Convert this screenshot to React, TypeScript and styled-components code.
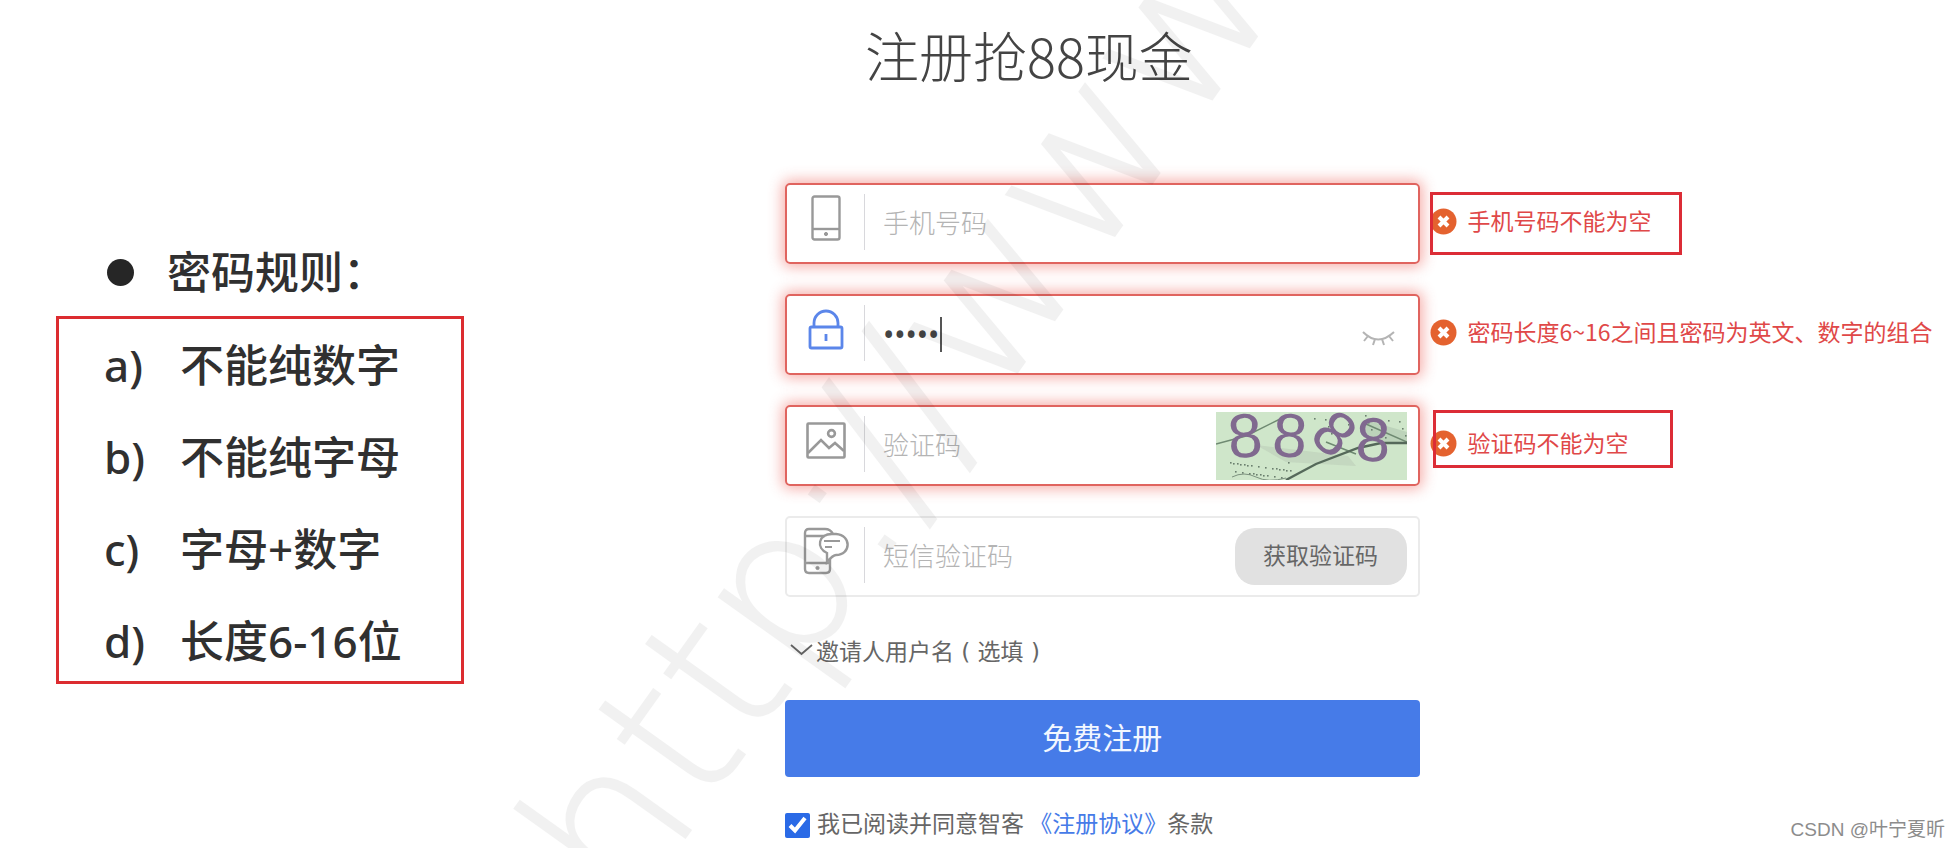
import React, { useState } from "react";
import styled, { createGlobalStyle } from "styled-components";

const sans = '"Noto Sans", "Noto Sans CJK SC", sans-serif';
const cjk = '"Noto Sans CJK SC", sans-serif';

const GlobalStyle = createGlobalStyle`
  *, *::before, *::after { box-sizing: border-box; }
  body { margin: 0; background: #fff; font-family: ${cjk}; }
  input, button { font-family: inherit; }
`;

const Page = styled.div`
  position: relative;
  display: grid;
  grid-template-columns: 2fr 3fr;
  min-height: 100vh;
  overflow: hidden;
`;

const Rules = styled.aside`
  padding: 226px 0 0 56px;
  font-family: ${sans};
  font-size: 44px;
  font-weight: 500;
  color: #303030;
`;

const RulesTitle = styled.h2`
  display: flex;
  align-items: center;
  gap: 33px;
  height: 90px;
  margin: 0;
  padding: 2px 0 0 51px;
  font-size: inherit;
  font-weight: inherit;
  line-height: 60px;
`;

const Bullet = styled.span`
  width: 27px;
  height: 27px;
  border-radius: 50%;
  background: #262626;
`;

const RuleList = styled.ul`
  display: flex;
  flex-direction: column;
  gap: 32px;
  width: 56%;
  margin: 0;
  padding: 16px 0 10px 45px;
  border: 3px solid #dc2c30;
  list-style: none;
  white-space: nowrap;
`;

const Rule = styled.li`
  display: flex;
  height: 60px;
  line-height: 60px;
`;

const Marker = styled.span`
  width: 76px;
`;

const Main = styled.main`
  padding: 22px 0 6px 1px;
  color: #666;
`;

const Title = styled.h1`
  margin: 0 0 95px;
  padding-left: 80px;
  font-size: 54px;
  font-weight: 300;
  line-height: 66px;
  color: #444;
`;

const Form = styled.form`
  display: flex;
  flex-direction: column;
`;

const Row = styled.div`
  display: flex;
  gap: 10px;
  height: 81px;
  margin-bottom: 30px;
`;

const Field = styled.div<{ $invalid?: boolean }>`
  display: flex;
  align-items: center;
  width: 54%;
  padding-right: 11px;
  border: 2px solid ${(p) => (p.$invalid ? "#e0645f" : "#ebebeb")};
  border-radius: 5px;
  box-shadow: ${(p) => (p.$invalid ? "0 0 14px 3px rgba(235, 80, 70, 0.45)" : "none")};
`;

const FieldIcon = styled.label`
  display: flex;
  flex: none;
  align-self: flex-start;
  align-items: center;
  justify-content: center;
  width: 77px;
  height: 66px;
`;

const Divider = styled.span`
  flex: none;
  align-self: flex-start;
  width: 1px;
  height: 56px;
  margin: 9px 18px 0 0;
  background: #d8d8dc;
`;

const Input = styled.input`
  flex: 1;
  min-width: 0;
  height: 60px;
  padding: 0 0 4px;
  border: 0;
  outline: 0;
  background: transparent;
  font-size: 26px;
  font-weight: 300;
  color: #444;
  &::placeholder { color: #b4b4b4; opacity: 1; }
`;

const PasswordInput = styled(Input)`
  flex: none;
  width: 57px;
  padding: 0;
  font-family: "Noto Sans", sans-serif;
  font-size: 30px;
  font-weight: 400;
`;

const Caret = styled.span`
  width: 2px;
  height: 35px;
  margin-right: auto;
  background: #555;
`;

const EyeButton = styled.button`
  display: flex;
  padding: 8px 12px 0;
  border: 0;
  background: none;
`;

const CodeButton = styled.button`
  flex: none;
  width: 172px;
  height: 57px;
  padding: 0 0 5px;
  border: 0;
  border-radius: 20px;
  background: #e1e1e1;
  font-size: 23px;
  color: #666;
`;

const ErrorText = styled.p`
  position: relative;
  display: flex;
  align-items: center;
  gap: 11px;
  margin: 0;
  padding-bottom: 4px;
  font-size: 23px;
  color: #e04848;
  white-space: nowrap;
`;

const Message = styled.span`
  padding-bottom: 4px;
`;

const Highlight = styled.span<{ $compact?: boolean }>`
  position: absolute;
  inset: ${(p) => (p.$compact ? "5px -44px 18px 3px" : "9px -30px 9px 0")};
  border: 3px solid #dc2c36;
`;

const InviteToggle = styled.button`
  display: flex;
  align-items: center;
  gap: 3px;
  align-self: flex-start;
  height: 32px;
  margin: 7px 0 34px;
  padding: 0 0 0 5px;
  border: 0;
  background: none;
  font-family: "DejaVu Sans", ${cjk};
  font-size: 23px;
  color: #666;
`;

const Submit = styled.button`
  width: 54%;
  height: 77px;
  padding: 0 0 5px;
  border: 0;
  border-radius: 4px;
  background: #467be8;
  font-size: 30px;
  color: #f2f7ff;
`;

const Agreement = styled.div`
  display: flex;
  align-items: center;
  gap: 7px;
  height: 30px;
  margin-top: 33px;
  font-size: 23px;
  line-height: 26px;
`;

const Checkbox = styled.input`
  width: 25px;
  height: 25px;
  margin: 0;
  accent-color: #2a6ae6;
`;

const AgreementText = styled.span`
  padding-bottom: 6px;
`;

const Link = styled.a`
  color: #467be8;
  text-decoration: none;
`;

const Watermark = styled.svg`
  position: absolute;
  inset: 0;
  width: 100%;
  height: 100%;
  pointer-events: none;
`;

const Credit = styled.span`
  position: absolute;
  right: 15px;
  bottom: 4px;
  font-family: "Liberation Sans", ${cjk};
  font-size: 19px;
  line-height: 28px;
  color: #8c8c8c;
`;

const PhoneIcon = () => (
  <svg width="30" height="46" viewBox="0 0 30 46" fill="none" stroke="#999" strokeWidth="2.4">
    <rect x="1.5" y="1.5" width="27" height="43" rx="2" />
    <path d="M2 34h26" />
    <circle cx="15" cy="39" r="1.6" fill="#999" strokeWidth="1" />
  </svg>
);

const LockIcon = () => (
  <svg width="36" height="42" viewBox="0 0 36 42" fill="none" stroke="#5b86ea" strokeWidth="2.8">
    <rect x="2" y="19" width="32" height="21" rx="1.5" />
    <path d="M6 19v-4a12 12 0 0 1 24 0v4M18 26v7" />
  </svg>
);

const ImageIcon = () => (
  <svg width="40" height="37" viewBox="0 0 40 37" fill="none" stroke="#999" strokeWidth="2.6">
    <rect x="1.5" y="1.5" width="37" height="34" rx="1" />
    <path d="M2 31 15 18l8 8 6-5 9 8" />
    <circle cx="25.5" cy="11.5" r="3.4" />
  </svg>
);

const SmsIcon = () => (
  <svg width="48" height="48" viewBox="0 0 48 48" fill="none" stroke="#999" strokeWidth="2.4">
    <path d="M31 7C29 3 26 2 23 2H7Q3 2 3 6v36q0 4 4 4h17q4 0 4-4V32M3 9h20M3 36h25" />
    <path d="M25 26C14 21 16 7 30 7h4c16 1 15 21 0 21q-3 0-9 7z" />
    <path d="M22 14h16M23 20h7" strokeWidth="2" />
    <circle cx="15.5" cy="41" r="1.6" fill="#999" strokeWidth="1" />
  </svg>
);

const ClosedEyeIcon = () => (
  <svg width="33" height="17" viewBox="0 0 33 17" fill="none" stroke="#b4b4b4" strokeWidth="2">
    <path d="M1 2q15 15 31 0M6 6l-4 5M13 9l-2 6M20 9l2 6M27 6l4 5" />
  </svg>
);

const ErrorIcon = () => (
  <svg width="27" height="27" viewBox="0 0 27 27">
    <circle cx="13.5" cy="13.5" r="13" fill="#e4622f" />
    <path d="M9 9l9 9M18 9l-9 9" stroke="#fff" strokeWidth="4" />
  </svg>
);

const ChevronIcon = () => (
  <svg width="23" height="14" viewBox="0 0 23 14" fill="none" stroke="#666" strokeWidth="1.8">
    <path d="M1 2l10.5 9L22 2" />
  </svg>
);

const digits = [
  { x: 29, y: 23, turn: -4 },
  { x: 74, y: 23, turn: 4 },
  { x: 119, y: 21, turn: 40 },
  { x: 157, y: 27, turn: 2 },
];

const specks = Array.from({ length: 46 }, (_, i) => ({
  x: i < 26 ? 14 + ((i * 23) % 62) : 96 + ((i * 37) % 94),
  y: i < 26 ? 50 + ((i * 11) % 16) : 2 + ((i * 13) % 24),
}));

const Captcha = () => (
  <svg width="191" height="68" viewBox="0 0 191 68" role="img" aria-label="8888">
    <rect width="191" height="68" fill="#cfe6ca" />
    <path d="M40 33 132 44 140 54 70 50z" fill="#b9c9b6" opacity="0.5" />
    <path d="M150 8 191 20V30H150z" fill="#a9bfa9" opacity="0.5" />
    <path d="M0 32 30 24 66 6M150 12l41 18M110 30l30 12" stroke="#6f8a72" strokeWidth="1.5" fill="none" />
    <path d="M70 68 100 52 142 36 165 31 191 31" stroke="#55695a" strokeWidth="2.4" fill="none" />
    <path d="M16 65q12-6 24 0t30 1" stroke="#7c917e" fill="none" />
    {specks.map((s, i) => (
      <rect key={i} x={s.x} y={s.y} width="1.6" height="1.6" fill="#6a7f6e" />
    ))}
    {digits.map((d, i) => (
      <text
        key={i}
        x="0"
        y="22"
        textAnchor="middle"
        transform={`translate(${d.x} ${d.y}) rotate(${d.turn})`}
        fontFamily="Liberation Sans, sans-serif"
        fontSize="62"
        fill="#80698f"
      >
        8
      </text>
    ))}
  </svg>
);

const rules = [
  ["a)", "不能纯数字"],
  ["b)", "不能纯字母"],
  ["c)", "字母+数字"],
  ["d)", "长度6-16位"],
];

export default function App() {
  const [agreed, setAgreed] = useState(true);
  const [password, setPassword] = useState("abcde");
  return (
    <>
      <GlobalStyle />
      <Page>
        <Rules>
          <RulesTitle>
            <Bullet />
            密码规则：
          </RulesTitle>
          <RuleList>
            {rules.map(([marker, text]) => (
              <Rule key={marker}>
                <Marker>{marker}</Marker>
                {text}
              </Rule>
            ))}
          </RuleList>
        </Rules>
        <Main>
          <Title>注册抢88现金</Title>
          <Form onSubmit={(e) => e.preventDefault()}>
            <Row>
              <Field $invalid>
                <FieldIcon htmlFor="phone"><PhoneIcon /></FieldIcon>
                <Divider />
                <Input id="phone" type="tel" aria-label="手机号码" placeholder="手机号码" />
              </Field>
              <ErrorText>
                <ErrorIcon />
                <Message>手机号码不能为空</Message>
                <Highlight />
              </ErrorText>
            </Row>
            <Row>
              <Field $invalid>
                <FieldIcon htmlFor="password"><LockIcon /></FieldIcon>
                <Divider />
                <PasswordInput
                  id="password"
                  type="password"
                  aria-label="密码"
                  value={password}
                  onChange={(e) => setPassword(e.target.value)}
                />
                <Caret />
                <EyeButton type="button" aria-label="显示密码"><ClosedEyeIcon /></EyeButton>
              </Field>
              <ErrorText>
                <ErrorIcon />
                <Message>密码长度6~16之间且密码为英文、数字的组合</Message>
              </ErrorText>
            </Row>
            <Row>
              <Field $invalid>
                <FieldIcon htmlFor="captcha"><ImageIcon /></FieldIcon>
                <Divider />
                <Input id="captcha" type="text" aria-label="验证码" placeholder="验证码" />
                <Captcha />
              </Field>
              <ErrorText>
                <ErrorIcon />
                <Message>验证码不能为空</Message>
                <Highlight $compact />
              </ErrorText>
            </Row>
            <Row>
              <Field>
                <FieldIcon htmlFor="sms"><SmsIcon /></FieldIcon>
                <Divider />
                <Input id="sms" type="text" aria-label="短信验证码" placeholder="短信验证码" />
                <CodeButton type="button">获取验证码</CodeButton>
              </Field>
            </Row>
            <InviteToggle type="button">
              <ChevronIcon />
              邀请人用户名 ( 选填 )
            </InviteToggle>
            <Submit type="submit">免费注册</Submit>
            <Agreement>
              <Checkbox id="agree" type="checkbox" checked={agreed} onChange={(e) => setAgreed(e.target.checked)} />
              <AgreementText>
                <label htmlFor="agree">我已阅读并同意智客</label>{" "}
                <Link href="#terms">《注册协议》</Link>条款
              </AgreementText>
            </Agreement>
          </Form>
        </Main>
        <Watermark aria-hidden="true">
          <text
            transform="translate(628 918) rotate(-54.5)"
            fontFamily="DejaVu Sans Light, DejaVu Sans, sans-serif"
            fontWeight="200"
            fontSize="205"
            fill="#000"
            stroke="#000"
            strokeWidth="2"
            opacity="0.05"
          >
            http://www
          </text>
        </Watermark>
        <Credit>CSDN @叶宁夏昕</Credit>
      </Page>
    </>
  );
}
